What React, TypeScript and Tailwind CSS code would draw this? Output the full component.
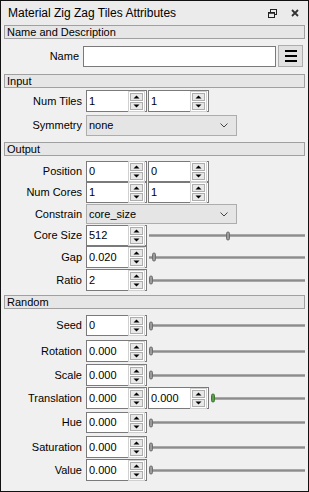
import React from "react";

const font = { fontFamily: '"Liberation Sans", Arial, sans-serif' };

function Up() {
  return (
    <svg width="7" height="4" viewBox="0 0 7 4">
      <path d="M0.5 3.5 L3.5 0.5 L6.5 3.5 Z" fill="#000" />
    </svg>
  );
}
function Down() {
  return (
    <svg width="7" height="4" viewBox="0 0 7 4">
      <path d="M0.5 0.5 L3.5 3.5 L6.5 0.5 Z" fill="#000" />
    </svg>
  );
}

function Spin({ value, h = "h-[21px]" }: { value: string; h?: string }) {
  return (
    <div className={`w-[61px] ${h} bg-white border border-[#7a7a7a] flex items-center shrink-0`}>
      <span className="flex-1 pl-[2px] text-[11px] leading-none text-black">{value}</span>
      <div className="flex flex-col gap-[1px] mr-[1px] p-[1px] border border-[#d0d0d0]">
        <div className="w-[13px] h-[8px] bg-[#e8e8e8] border border-[#adadad] flex items-center justify-center">
          <Up />
        </div>
        <div className="w-[13px] h-[8px] bg-[#e8e8e8] border border-[#adadad] flex items-center justify-center">
          <Down />
        </div>
      </div>
    </div>
  );
}

function Slider({ pos, green = false }: { pos: number; green?: boolean }) {
  return (
    <div className="relative flex-1 h-full ml-[2px] flex items-center">
      <div className="w-full h-[3px] bg-[#8c8c8c] border-y border-[#a8a8a8]" />
      <div
        className={`absolute top-1/2 -translate-y-1/2 w-[4px] h-[9px] rounded-[2px] border ${
          green ? "bg-[#5a9a4a] border-[#3d7a30]" : "bg-[#9a9a9a] border-[#6e6e6e]"
        }`}
        style={{ left: pos }}
      />
    </div>
  );
}

function Header({ text, mt }: { text: string; mt: string }) {
  return (
    <div className={`${mt} h-[14px] border border-[#a0a0a0] bg-[#e6e6e6] flex items-center pl-[2px] text-[11px] leading-none text-black`}>
      {text}
    </div>
  );
}

function Label({ text }: { text: string }) {
  return (
    <div className="w-[79px] shrink-0 text-right pr-[1px] text-[11px] leading-none text-black">{text}</div>
  );
}

function Combo({ value }: { value: string }) {
  return (
    <div className="ml-[3px] w-[151px] h-full bg-[#e5e5e5] border border-[#adadad] flex items-center justify-between pl-[2px] pr-[8px] text-[11px] leading-none text-black">
      <span>{value}</span>
      <svg width="8" height="5" viewBox="0 0 8 5">
        <path d="M0.5 0.5 L4 4 L7.5 0.5" stroke="#444" strokeWidth="1" fill="none" />
      </svg>
    </div>
  );
}

function SpinSliderRow({
  label,
  value,
  mt,
  h,
  pos,
}: {
  label: string;
  value: string;
  mt: string;
  h: string;
  pos: number;
}) {
  return (
    <div className={`${mt} ${h} flex items-center`}>
      <Label text={label} />
      <div className="ml-[3px] h-full flex">
        <Spin value={value} h="h-full" />
      </div>
      <Slider pos={pos} />
    </div>
  );
}

export default function App() {
  return (
    <div
      className="w-[309px] h-[492px] border border-[#111] bg-[#f0f0f0] flex flex-col overflow-hidden"
      style={font}
    >
      {/* Title bar */}
      <div className="h-[24px] shrink-0 flex items-center justify-between pl-[7px] pr-[9px] bg-[#ebebeb]">
        <span className="text-[12px] leading-none text-black">Material Zig Zag Tiles Attributes</span>
        <div className="flex items-center gap-[14px]">
          <svg width="9" height="9" viewBox="0 0 9 9">
            <rect x="2.5" y="0.5" width="6" height="5" fill="none" stroke="#222" strokeWidth="1" />
            <rect x="0.5" y="3.5" width="6" height="5" fill="#ebebeb" stroke="#222" strokeWidth="1" />
            <line x1="0.5" y1="4" x2="6.5" y2="4" stroke="#222" strokeWidth="1.5" />
          </svg>
          <svg width="8" height="8" viewBox="0 0 8 8">
            <path d="M1 1 L7 7 M7 1 L1 7" stroke="#333" strokeWidth="1.8" />
          </svg>
        </div>
      </div>

      <div className="flex flex-col px-[3px]">
        <Header text="Name and Description" mt="mt-0" />

        {/* Name row */}
        <div className="mt-[6px] h-[22px] flex items-center">
          <div className="w-[76px] shrink-0 text-right pr-[1px] text-[11px] leading-none text-black">Name</div>
          <div className="ml-[3px] w-[193px] h-[21px] mt-[1px] bg-white border border-[#7a7a7a]" />
          <div className="ml-[2px] w-[25px] h-[22px] bg-[#e1e1e1] border border-[#adadad] flex flex-col items-center justify-center gap-[3px]">
            <div className="w-[12px] h-[2px] bg-black" />
            <div className="w-[12px] h-[2px] bg-black" />
            <div className="w-[12px] h-[2px] bg-black" />
          </div>
        </div>

        <Header text="Input" mt="mt-[7px]" />

        <div className="mt-[2px] h-[22px] flex items-center">
          <Label text="Num Tiles" />
          <div className="ml-[3px] h-full flex gap-[1px]">
            <Spin value="1" h="h-full" />
            <Spin value="1" h="h-full" />
          </div>
        </div>

        <div className="mt-[3px] h-[21px] flex items-center">
          <Label text="Symmetry" />
          <Combo value="none" />
        </div>

        <Header text="Output" mt="mt-[6px]" />

        <div className="mt-[5px] h-[21px] flex items-center">
          <Label text="Position" />
          <div className="ml-[3px] h-full flex gap-[1px]">
            <Spin value="0" h="h-full" />
            <Spin value="0" h="h-full" />
          </div>
        </div>
        <div className="mt-0 h-[21px] flex items-center">
          <Label text="Num Cores" />
          <div className="ml-[3px] h-full flex gap-[1px]">
            <Spin value="1" h="h-full" />
            <Spin value="1" h="h-full" />
          </div>
        </div>
        <div className="mt-[1px] h-[20px] flex items-center">
          <Label text="Constrain" />
          <Combo value="core_size" />
        </div>

        <SpinSliderRow label="Core Size" value="512" mt="mt-[1px]" h="h-[21px]" pos={77} />
        <SpinSliderRow label="Gap" value="0.020" mt="mt-0" h="h-[22px]" pos={3} />
        <SpinSliderRow label="Ratio" value="2" mt="mt-[1px]" h="h-[22px]" pos={0} />

        <Header text="Random" mt="mt-[4px]" />

        <SpinSliderRow label="Seed" value="0" mt="mt-[6px]" h="h-[21px]" pos={0} />
        <SpinSliderRow label="Rotation" value="0.000" mt="mt-[4px]" h="h-[22px]" pos={0} />
        <SpinSliderRow label="Scale" value="0.000" mt="mt-[2px]" h="h-[22px]" pos={0} />

        <div className="mt-[1px] h-[22px] flex items-center">
          <Label text="Translation" />
          <div className="ml-[3px] h-full flex gap-[1px]">
            <Spin value="0.000" h="h-full" />
            <Spin value="0.000" h="h-full" />
          </div>
          <Slider pos={0} green />
        </div>

        <SpinSliderRow label="Hue" value="0.000" mt="mt-[3px]" h="h-[21px]" pos={0} />
        <SpinSliderRow label="Saturation" value="0.000" mt="mt-[3px]" h="h-[22px]" pos={0} />
        <SpinSliderRow label="Value" value="0.000" mt="mt-[1px]" h="h-[22px]" pos={0} />
      </div>
    </div>
  );
}
